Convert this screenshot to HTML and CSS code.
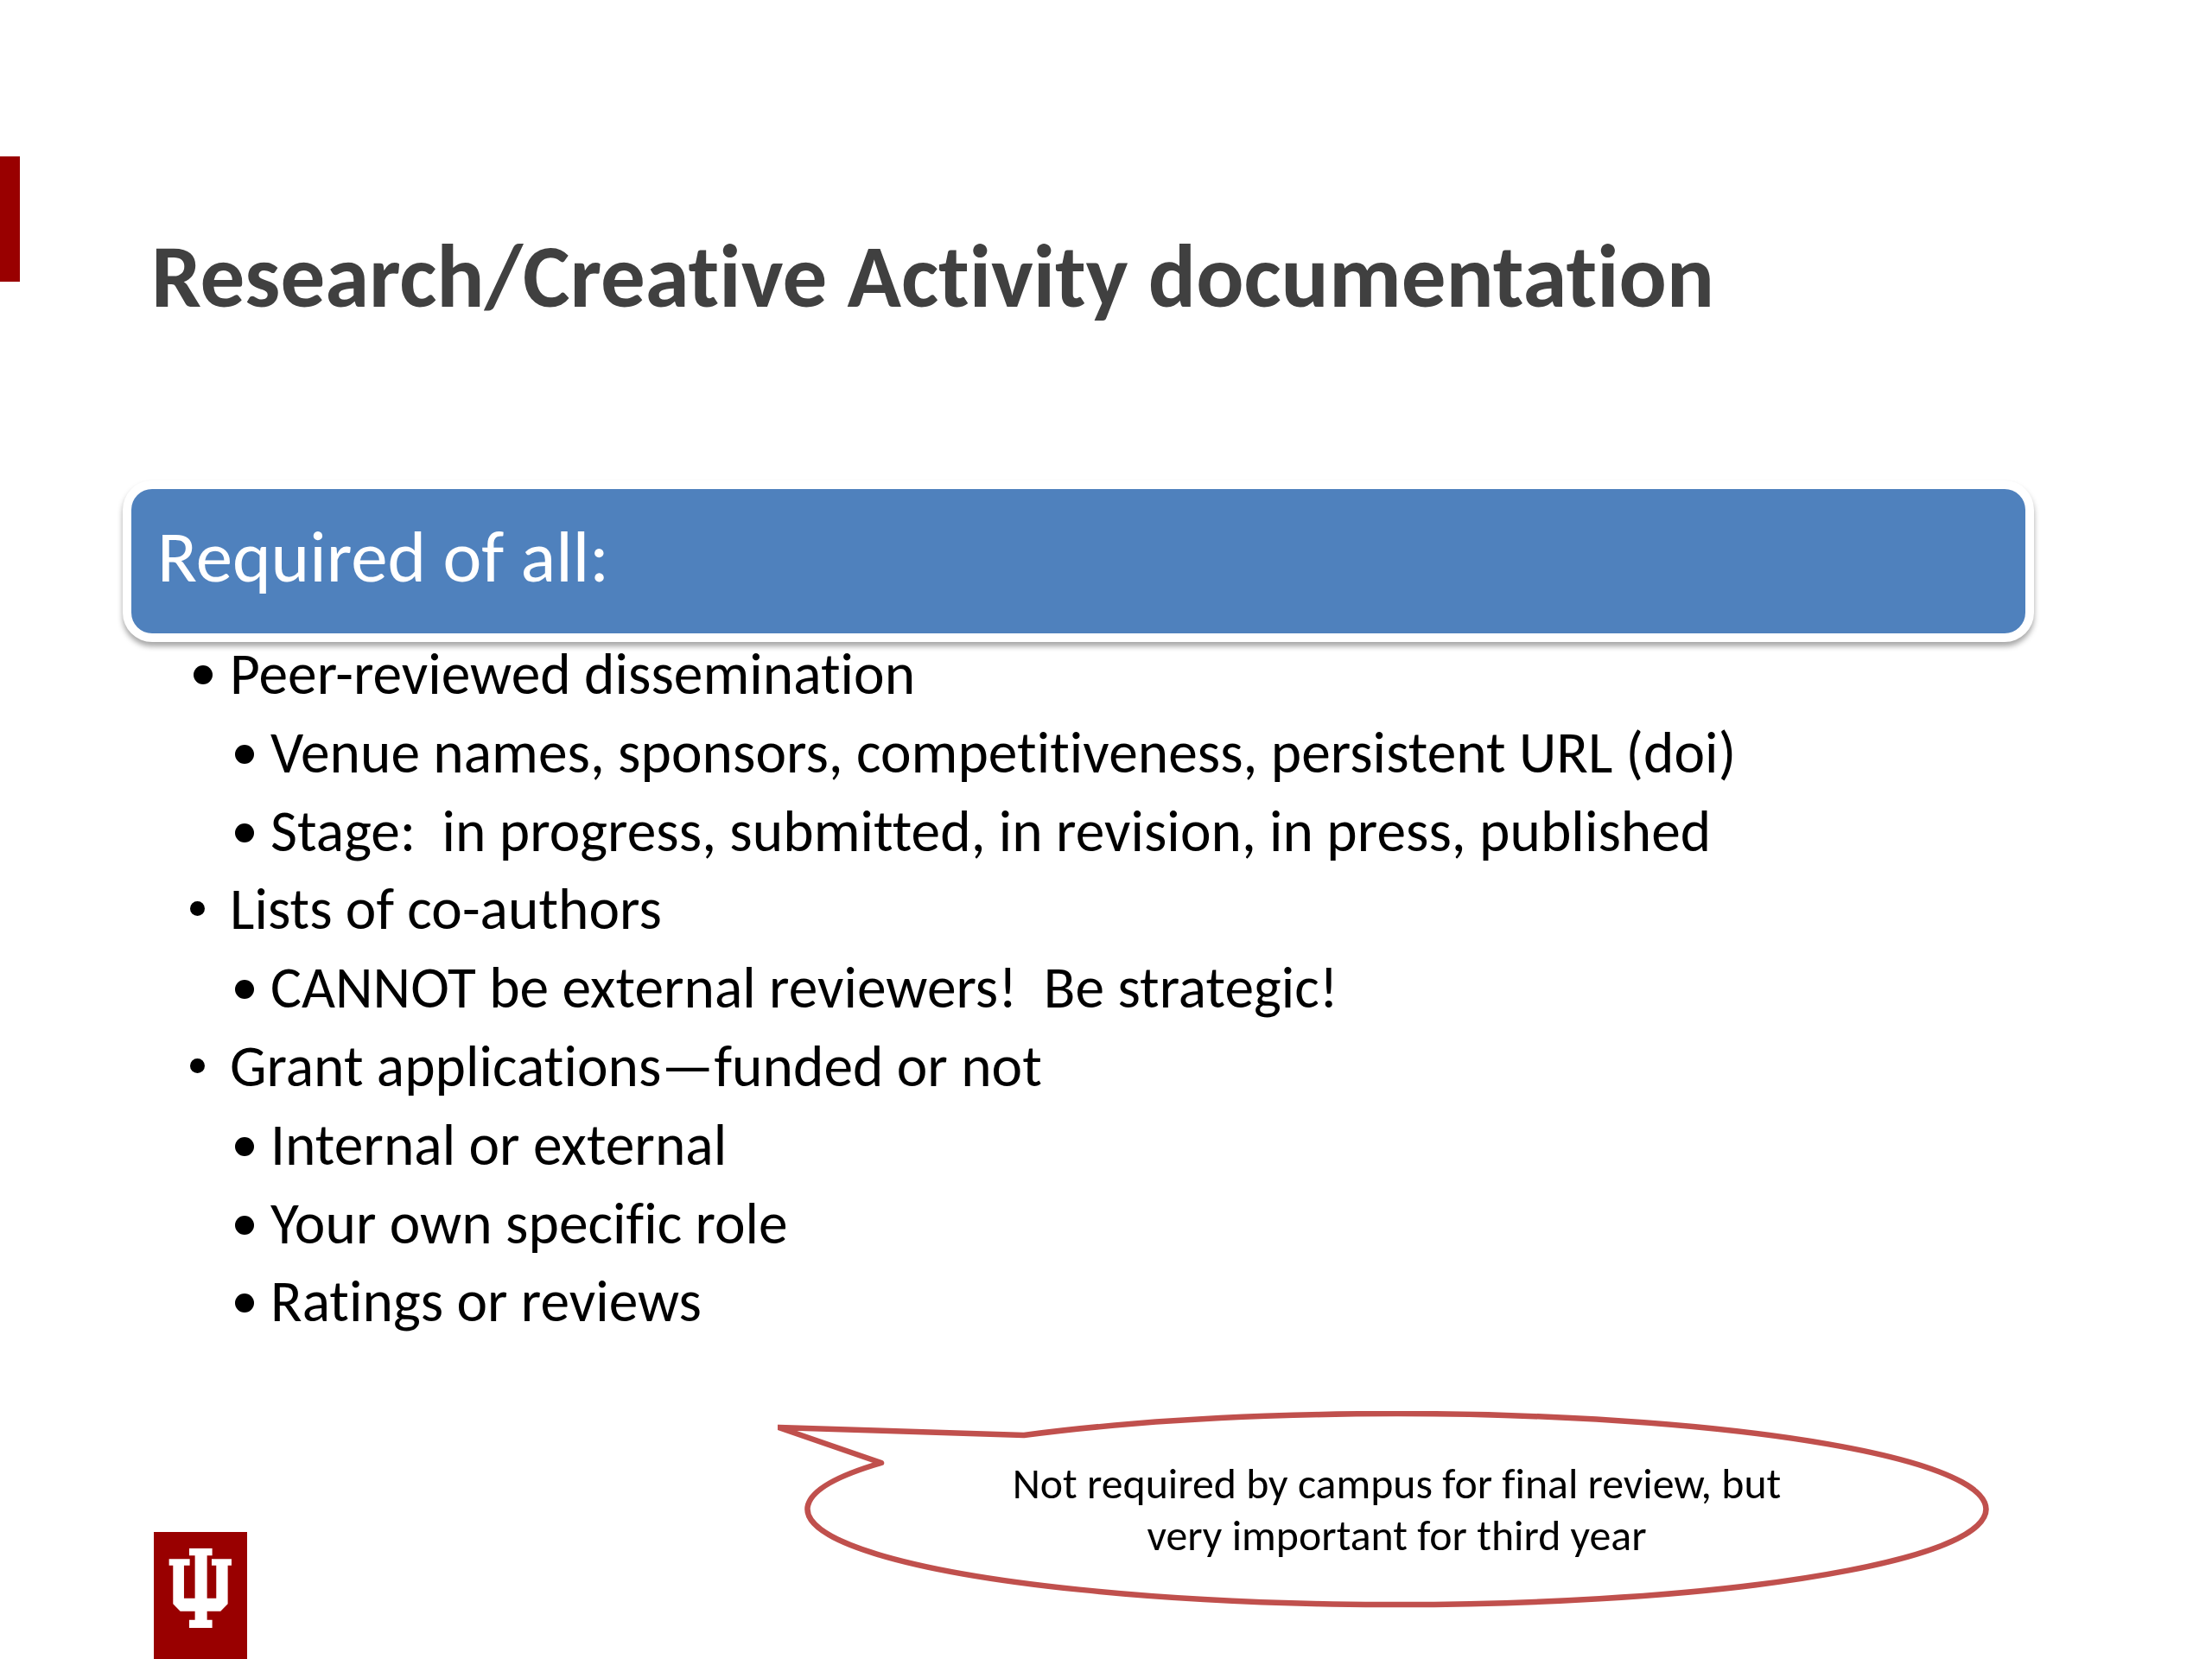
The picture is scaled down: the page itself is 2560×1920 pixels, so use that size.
FILE: index.html
```html
<!DOCTYPE html>
<html lang="en">
<head>
<meta charset="utf-8">
<title>Research/Creative Activity documentation</title>
<link rel="stylesheet" href="styles.css">
</head>
<body>
<main class="slide">
  <div class="accent"></div>
  <h1 class="title">Research/Creative Activity documentation</h1>
  <section class="content">
    <h2 class="banner">Required of all:</h2>
    <ul class="list">
      <li class="item big">Peer-reviewed dissemination</li>
      <li class="item sub">Venue names, sponsors, competitiveness, persistent URL (doi)</li>
      <li class="item sub">Stage:&nbsp; in progress, submitted, in revision, in press, published</li>
      <li class="item">Lists of co-authors</li>
      <li class="item sub">CANNOT be external reviewers!&nbsp; Be strategic!</li>
      <li class="item">Grant applications—funded or not</li>
      <li class="item sub">Internal or external</li>
      <li class="item sub">Your own specific role</li>
      <li class="item sub">Ratings or reviews</li>
    </ul>
  </section>
  <svg class="logo" viewBox="0 0 108 147" aria-label="Indiana University logo">
    <rect width="108" height="147" fill="#990000"/>
    <path fill="#fff" transform="translate(-57.7 -33.3) scale(0.3333)" d="M240 216V350L265 375H316V405H296V433H376V405H358V375H405L430 350V216H443V194H374V216H390V330H358V182H376V157H296V182H316V330H278V216H298V194H226V216Z"/>
  </svg>
  <div class="callout">
    <svg class="callout-shape" viewBox="0 0 1420 240" aria-hidden="true">
      <path d="M285 28A682 110.5 0 1 1 120 60L1 19Z"/>
    </svg>
    <p class="callout-text">Not required by campus for final review, but<br>very important for third year</p>
  </div>
</main>
</body>
</html>
```

FILE: styles.css
```css
html, body {
  margin: 0;
  padding: 0;
  background: #fff;
}
.slide {
  position: relative;
  width: 2560px;
  height: 1920px;
  overflow: hidden;
  background: #fff;
  font-family: Carlito, Lato, "Open Sans", sans-serif;
  font-variant-ligatures: none;
  color: #000;
  display: flex;
  flex-direction: column;
  filter: blur(0.7px);
}
.accent {
  position: absolute;
  left: 0;
  top: 181px;
  width: 23px;
  height: 145px;
  background: #990000;
}
.title {
  margin: 0;
  padding: 270px 0 0 175px;
  font-size: 103px;
  line-height: 100px;
  font-weight: 700;
  color: #404040;
}
.content {
  margin: 196px 0 0 152px;
  width: 2192px;
}
.banner {
  margin: 0;
  height: 167px;
  box-sizing: border-box;
  padding: 0 30px 12px;
  display: flex;
  align-items: center;
  background: #4f81bd;
  border-radius: 24px;
  box-shadow: 0 0 0 10px #fff, 0 5px 6px 10px rgba(0,0,0,0.35);
  color: #fff;
  font-size: 85px;
  font-weight: 400;
}
.list {
  list-style: none;
  margin: 0;
  padding: 2px 0 0 114px;
}
.item {
  position: relative;
  font-size: 67.4px;
  line-height: 90.8px;
  letter-spacing: 0.05px;
}
.item::before {
  content: "";
  position: absolute;
  left: -46px;
  top: 36px;
  width: 17px;
  height: 17px;
  border-radius: 50%;
  background: #000;
}
.item.big::before {
  left: -42px;
  top: 35px;
  width: 22px;
  height: 22px;
}
.item.sub {
  padding-left: 47px;
}
.item.sub::before {
  left: 6px;
  top: 36px;
  width: 22px;
  height: 22px;
}
.logo {
  position: absolute;
  left: 178px;
  top: 1773px;
  width: 108px;
  height: 147px;
}
.callout {
  position: absolute;
  left: 900px;
  top: 1633px;
  width: 1420px;
  height: 240px;
}
.callout-shape {
  display: block;
  width: 1420px;
  height: 240px;
}
.callout-shape path {
  fill: #fff;
  stroke: #c0504d;
  stroke-width: 6.5;
  stroke-linejoin: round;
}
.callout-text {
  position: absolute;
  left: 0;
  right: 0;
  top: 54px;
  margin: 0;
  padding-left: 13px;
  text-align: center;
  font-size: 49.8px;
  line-height: 60px;
}
```
